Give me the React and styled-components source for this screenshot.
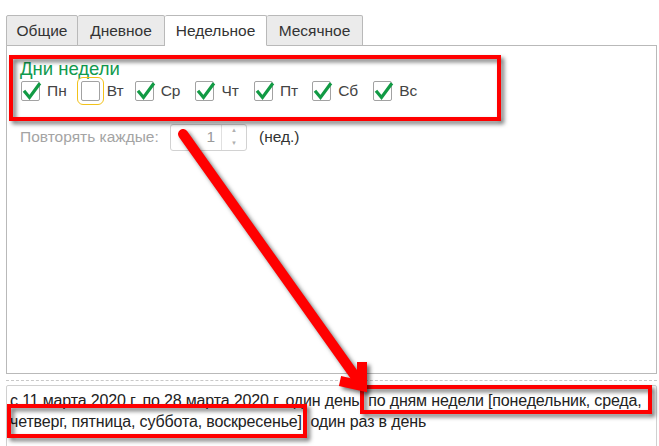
import React from 'react'
import styled, { createGlobalStyle } from 'styled-components'

const GlobalStyle = createGlobalStyle`
  html, body {
    margin: 0;
    padding: 0;
    background: #ffffff;
    overflow: hidden;
  }
  body {
    font-family: "Liberation Sans", Arial, sans-serif;
    color: #333;
  }
`

const Page = styled.div`
  position: relative;
  width: 659px;
  height: 446px;
  padding: 15px 2px 0 6px;
  box-sizing: border-box;
`

const TabBar = styled.div`
  display: flex;
  height: 31px;
  position: relative;
  z-index: 1;
`

const Tab = styled.div`
  display: flex;
  align-items: center;
  justify-content: center;
  width: ${p => p.$w}px;
  height: 31px;
  box-sizing: border-box;
  border: 1px solid #b9b9b9;
  border-left-width: ${p => (p.$first ? 1 : 0)}px;
  border-bottom-color: ${p => (p.$active ? '#fff' : '#b9b9b9')};
  border-radius: 2px 2px 0 0;
  background: ${p => (p.$active ? '#fff' : '#ebebeb')};
  font-size: 15.5px;
  color: #333;
`

const Panel = styled.div`
  margin-top: -1px;
  height: 329px;
  border: 1px solid #b9b9b9;
  box-sizing: border-box;
  padding: 9px 0 0 2px;
`

/* red annotation frame drawn by a pseudo element so its shadow stays off the content */
const Group = styled.div`
  position: relative;
  width: 492px;
  height: 66px;
  box-sizing: border-box;
  padding: 4px 0 0 11px;

  &::before {
    content: '';
    position: absolute;
    inset: 0;
    border: 4px solid #ff0000;
    filter: drop-shadow(3px 3px 2px rgba(0, 0, 0, 0.55));
    pointer-events: none;
  }
`

const Title = styled.div`
  font-size: 18.5px;
  line-height: 20px;
  color: #109a4e;
`

const DayRow = styled.div`
  display: flex;
  align-items: center;
  height: 24px;
  padding-left: 1px;
`

const Day = styled.label`
  display: flex;
  align-items: center;
  gap: 7px;
  margin-right: ${p => p.$mr}px;
  font-size: 15.5px;
  color: #444;
`

const Box = styled.span`
  position: relative;
  display: block;
  width: 19px;
  height: 20px;
  box-sizing: border-box;
  border: 1px solid #a2a2a2;
  border-radius: 2px;
  background: #fff;
  outline: ${p => (p.$focus ? '1px solid #f2c21a' : 'none')};
  outline-offset: 3px;

  svg {
    position: absolute;
    left: 0;
    top: 0;
    overflow: visible;
  }
`

const RepeatRow = styled.div`
  display: flex;
  align-items: center;
  margin-top: 2px;
  padding-left: 11px;
  height: 28px;
  font-size: 15.5px;
`

const Muted = styled.span`
  color: #a4a4a4;
  width: 150px;
`

const Spinner = styled.div`
  display: flex;
  width: 77px;
  height: 27px;
  box-sizing: border-box;
  border: 1px solid #d2d2d2;
  border-radius: 3px;
  margin-right: 12px;
`

const SpinValue = styled.div`
  flex: 1;
  display: flex;
  align-items: center;
  justify-content: flex-end;
  padding-right: 6px;
  color: #9a9a9a;
  font-size: 15.5px;
`

const SpinArrows = styled.div`
  width: 24px;
  border-left: 1px solid #e0e0e0;
  display: flex;
  flex-direction: column;
  align-items: center;
  justify-content: space-around;
  color: #b0b0b0;
  font-size: 6px;
  line-height: 7px;
`

const Unit = styled.span`
  color: #333;
`

const Dashed = styled.div`
  margin-top: 6px;
  border-top: 1px dashed #c8c8c8;
`

const Summary = styled.div`
  position: relative;
  margin-top: 4px;
  height: 70px;
  border: 1px solid #d0d0d0;
  border-radius: 2px;
  padding: 4px 0 0 3px;
  font-size: 16px;
  line-height: 21px;
  color: #222;
  letter-spacing: -0.15px;
`

const Mark = styled.div`
  position: absolute;
  left: ${p => p.$x}px;
  top: ${p => p.$y}px;
  width: ${p => p.$w}px;
  height: ${p => p.$h}px;
  box-sizing: border-box;
  border: 4px solid #ff0000;
  filter: drop-shadow(3px 3px 2px rgba(0, 0, 0, 0.55));
`

const ArrowLayer = styled.svg`
  position: absolute;
  left: 0;
  top: 0;
  pointer-events: none;
`

const Check = () => (
  <svg width="19" height="19" viewBox="0 0 19 19">
    <path d="M3 10 L7.5 15.5 L17 2.5" fill="none" stroke="#119a44" strokeWidth="3.2" strokeLinecap="square" strokeLinejoin="miter" />
  </svg>
)

const days = [
  { name: 'Пн', on: true, mr: 14 },
  { name: 'Вт', on: false, focus: true, mr: 11 },
  { name: 'Ср', on: true, mr: 15 },
  { name: 'Чт', on: true, mr: 15 },
  { name: 'Пт', on: true, mr: 14 },
  { name: 'Сб', on: true, mr: 15 },
  { name: 'Вс', on: true, mr: 0 },
]

const tabs = [
  { name: 'Общие', w: 72 },
  { name: 'Дневное', w: 87 },
  { name: 'Недельное', w: 102, active: true },
  { name: 'Месячное', w: 96 },
]

export default function App() {
  return (
    <Page>
      <GlobalStyle />
      <TabBar>
        {tabs.map((t, i) => (
          <Tab key={t.name} $first={i === 0} $active={t.active} $w={t.w}>
            {t.name}
          </Tab>
        ))}
      </TabBar>
      <Panel>
        <Group>
          <Title>Дни недели</Title>
          <DayRow>
            {days.map(d => (
              <Day key={d.name} $mr={d.mr}>
                <Box $focus={d.focus}>{d.on && <Check />}</Box>
                {d.name}
              </Day>
            ))}
          </DayRow>
        </Group>
        <RepeatRow>
          <Muted>Повторять каждые:</Muted>
          <Spinner>
            <SpinValue>1</SpinValue>
            <SpinArrows>
              <span>▲</span>
              <span>▼</span>
            </SpinArrows>
          </Spinner>
          <Unit>(нед.)</Unit>
        </RepeatRow>
      </Panel>
      <Dashed />
      <Summary>
        с 11 марта 2020 г. по 28 марта 2020 г. один день, по дням недели [понедельник, среда,
        <br />
        четверг, пятница, суббота, воскресенье], один раз в день
        <Mark $x={353} $y={-1} $w={292} $h={29} />
        <Mark $x={0} $y={18} $w={300} $h={34} />
      </Summary>
      <ArrowLayer width="659" height="446" viewBox="0 0 659 446">
        <g style={{ filter: 'drop-shadow(3px 3px 2px rgba(0,0,0,0.55))' }} stroke="#ff0000" strokeWidth="10" fill="none">
          <line x1="183" y1="134" x2="360" y2="383" strokeLinecap="round" />
          <polyline points="362,362 362,386 340,381" strokeLinejoin="miter" strokeLinecap="butt" />
        </g>
      </ArrowLayer>
    </Page>
  )
}
